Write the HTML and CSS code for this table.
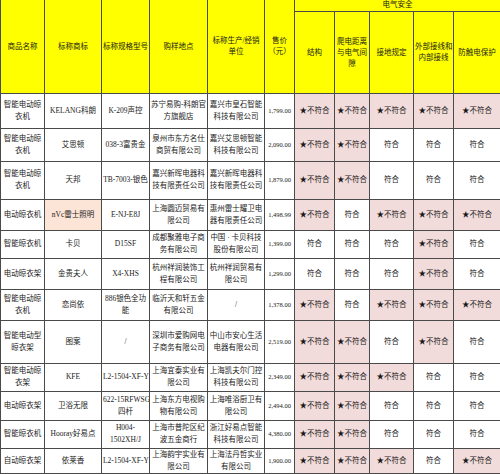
FILE: index.html
```html
<!DOCTYPE html>
<html lang="zh">
<head>
<meta charset="utf-8">
<title>晾衣机比较试验</title>
<link rel="stylesheet" href="styles.css">
</head>
<body>
<table class="sheet">
  <colgroup>
    <col class="c1"><col class="c2"><col class="c3"><col class="c4"><col class="c5"><col class="c6">
    <col class="c7"><col class="c8"><col class="c9"><col class="c10"><col class="c11">
  </colgroup>
  <thead>
    <tr class="h1">
      <th rowspan="2">商品名称</th>
      <th rowspan="2">标称商标</th>
      <th rowspan="2">标称规格型号</th>
      <th rowspan="2">购样地点</th>
      <th rowspan="2">标称生产/经销<br>单位</th>
      <th rowspan="2">售价<br>（元）</th>
      <th colspan="5" class="group">电气安全</th>
    </tr>
    <tr class="h2">
      <th>结构</th>
      <th>爬电距离<br>与电气间<br>隙</th>
      <th>接地规定</th>
      <th>外部接线和<br>内部接线</th>
      <th>防触电保护</th>
    </tr>
  </thead>
  <tbody>
    <tr class="r1">
      <td>智能电动晾<br>衣机</td><td>KELANG科朗</td><td>K-209声控</td><td>苏宁易购-科朗官<br>方旗舰店</td><td>嘉兴市皇石智能<br>科技有限公司</td><td class="num">1,799.00</td>
      <td class="bad">★不符合</td><td class="bad">★不符合</td><td class="bad">★不符合</td><td class="bad">★不符合</td><td class="bad">★不符合</td>
    </tr>
    <tr class="r2">
      <td>智能电动晾<br>衣机</td><td>艾思顿</td><td>038-3富贵金</td><td>泉州市东方名仕<br>商贸有限公司</td><td>嘉兴艾思顿智能<br>科技有限公司</td><td class="num">2,090.00</td>
      <td class="bad">★不符合</td><td class="bad">★不符合</td><td>符合</td><td>符合</td><td>符合</td>
    </tr>
    <tr class="r3">
      <td>智能电动晾<br>衣机</td><td>天邦</td><td>TB-7003-银色</td><td>嘉兴新晖电器科<br>技有限责任公司</td><td>嘉兴新晖电器科<br>技有限责任公司</td><td class="num">1,879.00</td>
      <td class="bad">★不符合</td><td class="bad">★不符合</td><td>符合</td><td>符合</td><td>符合</td>
    </tr>
    <tr class="r4">
      <td>电动晾衣机</td><td class="peach">nVc雷士照明</td><td>E-NJ-E8J</td><td>上海圆迈贸易有<br>限公司</td><td>惠州雷士耀卫电<br>器有限责任公司</td><td class="num">1,498.99</td>
      <td class="bad">★不符合</td><td>符合</td><td class="bad">★不符合</td><td class="bad">★不符合</td><td class="bad">★不符合</td>
    </tr>
    <tr class="r5">
      <td>智能晾衣机</td><td>卡贝</td><td>D15SF</td><td>成都聚雅电子商<br>务有限公司</td><td>中国 · 卡贝科技<br>股份有限公司</td><td class="num">1,399.00</td>
      <td>符合</td><td>符合</td><td>符合</td><td class="bad">★不符合</td><td>符合</td>
    </tr>
    <tr class="r6">
      <td>电动晾衣架</td><td>金贵夫人</td><td>X4-XHS</td><td>杭州祥润装饰工<br>程有限公司</td><td>杭州祥润贸易有<br>限公司</td><td class="num">1,299.00</td>
      <td>符合</td><td>符合</td><td>符合</td><td class="bad">★不符合</td><td>符合</td>
    </tr>
    <tr class="r7">
      <td>智能电动晾<br>衣机</td><td>恋尚依</td><td>886银色全功<br>能</td><td>临沂天和轩五金<br>有限公司</td><td>/</td><td class="num">1,378.00</td>
      <td class="bad">★不符合</td><td>符合</td><td class="bad">★不符合</td><td class="bad">★不符合</td><td class="bad">★不符合</td>
    </tr>
    <tr class="r8">
      <td>智能电动型<br>晾衣架</td><td>图案</td><td>/</td><td>深圳市爱购网电<br>子商务有限公司</td><td>中山市安心生活<br>电器有限公司</td><td class="num">2,519.00</td>
      <td class="bad">★不符合</td><td class="bad">★不符合</td><td>符合</td><td class="bad">★不符合</td><td>符合</td>
    </tr>
    <tr class="r9">
      <td>智能电动晾<br>衣架</td><td>KFE</td><td>L2-1504-XF-Y</td><td>上海宜泰实业有<br>限公司</td><td>上海凯夫尔门控<br>科技有限公司</td><td class="num">2,349.00</td>
      <td class="bad">★不符合</td><td class="bad">★不符合</td><td class="bad">★不符合</td><td>符合</td><td>符合</td>
    </tr>
    <tr class="r10">
      <td>电动晾衣架</td><td>卫浴无限</td><td>622-15RFWSG<br>四杆</td><td>上海东方电视购<br>物有限公司</td><td>上海唯浴厨卫有<br>限公司</td><td class="num">2,494.00</td>
      <td class="bad">★不符合</td><td class="bad">★不符合</td><td>符合</td><td>符合</td><td>符合</td>
    </tr>
    <tr class="r11">
      <td>智能晾衣机</td><td>Hooray好易点</td><td>H004-<br>1502XH/J</td><td>上海市普陀区纪<br>波五金商行</td><td>浙江好易点智能<br>科技有限公司</td><td class="num">4,380.00</td>
      <td class="bad">★不符合</td><td class="bad">★不符合</td><td>符合</td><td>符合</td><td>符合</td>
    </tr>
    <tr class="r12">
      <td>自动晾衣架</td><td>依莱香</td><td>L2-1504-XF-Y</td><td>上海韵宇实业有<br>限公司</td><td>上海法丹哲实业<br>有限公司</td><td class="num">1,900.00</td>
      <td class="bad">★不符合</td><td class="bad">★不符合</td><td class="bad">★不符合</td><td>符合</td><td class="bad">★不符合</td>
    </tr>
  </tbody>
</table>
</body>
</html>
```
FILE: styles.css
```css
html, body {
  margin: 0;
  padding: 0;
  background: #ffffff;
}

.sheet {
  border-collapse: collapse;
  table-layout: fixed;
  width: 500px;
  font-family: "Liberation Serif", "Noto Sans CJK SC", serif;
  font-size: 7.5px;
  color: #1a1a1a;
}

.c1 { width: 44px; }
.c2 { width: 57px; }
.c3 { width: 48px; }
.c4 { width: 58px; }
.c5 { width: 57px; }
.c6 { width: 30px; }
.c7 { width: 40px; }
.c8 { width: 35px; }
.c9 { width: 44px; }
.c10 { width: 40px; }
.c11 { width: 47px; }

.sheet th,
.sheet td {
  border: 1px solid #4a4a4a;
  padding: 0 1px;
  text-align: center;
  vertical-align: middle;
  white-space: nowrap;
  overflow: hidden;
  line-height: 12px;
  font-weight: normal;
}

.sheet th {
  background: #ffff00;
  line-height: 11px;
}

.sheet thead tr:first-child th {
  border-top: none;
}

.h1 { height: 11px; }
.h2 { height: 82px; }

.sheet th.group {
  line-height: 10px;
  height: 10px;
}

.r1 { height: 35px; }
.r2 { height: 33px; }
.r3 { height: 38px; }
.r4 { height: 31px; }
.r5 { height: 28px; }
.r6 { height: 31px; }
.r7 { height: 31px; }
.r8 { height: 43px; }
.r9 { height: 28px; }
.r10 { height: 29px; }
.r11 { height: 28px; }
.r12 { height: 25px; }

.sheet td.num {
  font-size: 6.5px;
  padding: 0;
}

.sheet td.bad {
  background: #f2dcdb;
}

.sheet td.peach {
  background: #fce4d6;
}
```
